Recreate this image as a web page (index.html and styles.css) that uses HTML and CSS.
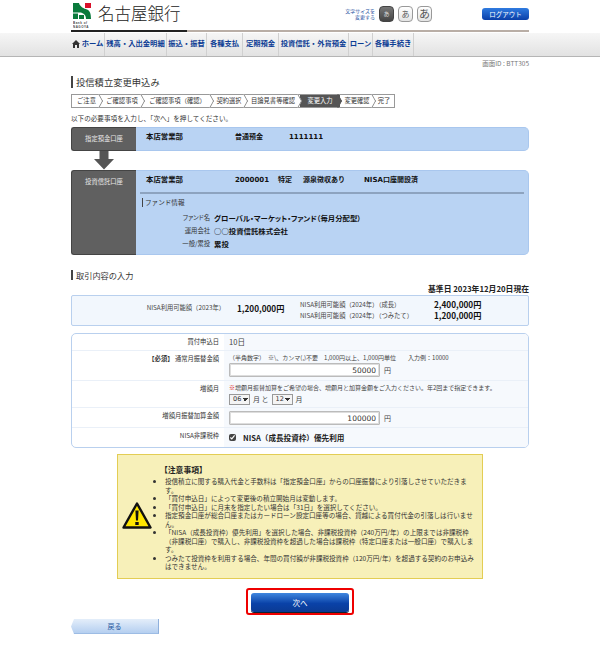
FILE: index.html
```html
<!DOCTYPE html>
<html lang="ja">
<head>
<meta charset="utf-8">
<title>投信積立変更申込み</title>
<link rel="stylesheet" href="styles.css">
</head>
<body>
<header class="header wrap">
  <div class="brand">
    <svg class="logo" width="19" height="26" viewBox="0 0 19 26">
      <path d="M0 0H6C7 4 11 5.500 14 6.500 17 7.500 18 11 18 16H13C13 12 11 10.500 8 9.500H0z" fill="#0a7a3c"/>
      <path d="M12 0h6v5h-6z" fill="#d8102a"/>
      <path d="M0 10.500h5V16H0zM6 12h5v4H6z" fill="#0a7a3c"/>
      <text class="logo-text" x="0" y="20.500">Bank of</text>
      <text class="logo-text" x="0" y="24.500">NAGOYA</text>
    </svg>
    <span class="bank">名古屋銀行</span>
  </div>
  <div class="tools">
    <span class="size-label">文字サイズを<br>変更する</span>
    <span class="size size-on">あ</span>
    <span class="size size-md">あ</span>
    <span class="size size-lg">あ</span>
    <span class="logout">ログアウト</span>
  </div>
</header>
<div class="rule wrap"><span class="rule-dark"></span></div>
<nav class="nav">
  <div class="wrap nav-items">
    <a class="nav-item w-home"><svg class="home" width="8" height="8" viewBox="0 0 8 8"><path d="M4 0 8 4H7v4H1V4H0z" fill="#333"/><path d="M3 5h2v3H3z" fill="#eee"/></svg>ホーム</a>
    <a class="nav-item w-a">残高・入出金明細</a>
    <a class="nav-item w-b">振込・振替</a>
    <a class="nav-item w-c">各種支払</a>
    <a class="nav-item w-c">定期預金</a>
    <a class="nav-item w-d">投資信託・外貨預金</a>
    <a class="nav-item w-e">ローン</a>
    <a class="nav-item w-f">各種手続き</a>
  </div>
</nav>
<main class="wrap">
  <p class="screen-id">画面ID : BTT305</p>
  <h1 class="title">投信積立変更申込み</h1>
  <ol class="steps">
    <li class="step s1">ご注意</li>
    <li class="step s2">ご確認事項</li>
    <li class="step s3">ご確認事項（確認）</li>
    <li class="step s4">契約選択</li>
    <li class="step s5">目論見書等確認</li>
    <li class="step s6 current">変更入力</li>
    <li class="step s7">変更確認</li>
    <li class="step s8">完了</li>
  </ol>
  <p class="lead">以下の必要事項を入力し、「次へ」を押してください。</p>

  <section class="account acc-short">
    <h2 class="acc-label">指定預金口座</h2>
    <div class="acc-body acc-row">
      <span class="c1">本店営業部</span><span class="c2">普通預金</span><span>1111111</span>
    </div>
  </section>
  <svg class="arrow" width="20" height="19" viewBox="0 0 20 19"><path d="M5.500 0h9v8H20L10 18.500 0 8h5.500z" fill="#555"/></svg>
  <section class="account acc-tall">
    <h2 class="acc-label">投資信託口座</h2>
    <div class="acc-body">
      <div class="acc-row acc-line">
        <span class="c1">本店営業部</span><span class="c3">2000001</span><span class="c4">特定</span><span class="c5">源泉徴収あり</span><span>NISA口座開設済</span>
      </div>
      <h3 class="fund-title">ファンド情報</h3>
      <dl class="fund">
        <dt>ファンド名</dt><dd>グローバル・マーケット・ファンド（毎月分配型）</dd>
        <dt>運用会社</dt><dd>○○投資信託株式会社</dd>
        <dt>一般/累投</dt><dd>累投</dd>
      </dl>
    </div>
  </section>

  <h1 class="title title-2">取引内容の入力</h1>
  <p class="base-date">基準日 2023年12月20日現在</p>
  <section class="limit">
    <div class="limit-left"><span class="limit-name">NISA利用可能額（2023年）</span><b class="limit-val">1,200,000円</b></div>
    <div class="limit-right">
      <div class="limit-row"><span class="limit-name2">NISA利用可能額（2024年）（成長）</span><b class="limit-val">2,400,000円</b></div>
      <div class="limit-row"><span class="limit-name2">NISA利用可能額（2024年）（つみたて）</span><b class="limit-val">1,200,000円</b></div>
    </div>
  </section>

  <section class="form">
    <div class="row r1"><div class="lab">買付申込日</div><div class="val val-big">10日</div></div>
    <div class="row r2"><div class="lab"><b>【必須】</b> 通常月振替金額</div><div class="val">
      <div class="hint">（半角数字）　※\、カンマ(,)不要　1,000円以上、1,000円単位　　入力例：10000</div>
      <div class="amount"><input class="input" type="text" value="50000"><span>円</span></div>
    </div></div>
    <div class="row r3"><div class="lab">増額月</div><div class="val">
      <div class="hint"><span class="red">※</span>増額月振替加算をご希望の場合、増額月と加算金額をご入力ください。年2回まで指定できます。</div>
      <div class="months">
        <select class="sel"><option>06</option></select><span>月 と</span>
        <select class="sel"><option>12</option></select><span>月</span>
      </div>
    </div></div>
    <div class="row r4"><div class="lab">増額月振替加算金額</div><div class="val"><div class="amount"><input class="input" type="text" value="100000"><span>円</span></div></div></div>
    <div class="row r5"><div class="lab">NISA非課税枠</div><div class="val check"><input class="cb" type="checkbox" checked><b>NISA（成長投資枠）優先利用</b></div></div>
  </section>

  <section class="notice">
    <svg class="warn" width="30" height="27" viewBox="0 0 30 27">
      <path d="M15 1.500 28.500 25.500H1.500z" fill="#ffe600" stroke="#111" stroke-width="2.400" stroke-linejoin="round"/>
      <path d="M13.400 8.500h3.200l-.6 10h-2zM13.300 20h3.400v3h-3.400z" fill="#111"/>
    </svg>
    <div class="notice-body">
      <h2 class="notice-title">【注意事項】</h2>
      <ul class="notice-list">
        <li>投信積立に関する購入代金と手数料は「指定預金口座」からの口座振替により引落しさせていただきま<br>す。</li>
        <li>「買付申込日」によって変更後の積立開始月は変動します。</li>
        <li>「買付申込日」に月末を指定したい場合は「31日」を選択してください。</li>
        <li>指定預金口座が総合口座またはカードローン設定口座等の場合、貸越による買付代金の引落しは行いませ<br>ん。</li>
        <li>「NISA（成長投資枠）優先利用」を選択した場合、非課税投資枠（240万円/年）の上限までは非課税枠<br>（非課税口座）で購入し、非課税投資枠を超過した場合は課税枠（特定口座または一般口座）で購入しま<br>す。</li>
        <li>つみたて投資枠を利用する場合、年間の買付額が非課税投資枠（120万円/年）を超過する契約のお申込み<br>はできません。</li>
      </ul>
    </div>
  </section>

  <div class="next-wrap"><button class="next" type="button">次へ</button></div>
  <button class="back" type="button">戻る</button>
</main>
</body>
</html>
```
FILE: styles.css
```css
* { box-sizing: border-box; }
html, body { margin: 0; padding: 0; }
body {
  height: 653px;
  overflow: hidden;
  background: #fff;
  color: #333;
  font: 6.6px/1.2 "DejaVu Sans", "Noto Sans CJK JP", sans-serif;
}
.wrap { width: 458px; margin-left: 71px; }
h1, h2, h3, p, ul, ol, dl, dd { margin: 0; padding: 0; font-weight: normal; }

/* header */
.header { height: 30px; display: flex; justify-content: space-between; }
.brand { display: flex; align-items: flex-start; padding: 3px 0 0 2px; }
.logo { display: block; }
.logo-text { font: 700 3px "Liberation Sans", sans-serif; letter-spacing: .5px; fill: #444; }
.bank { margin: 0 0 0 6px; font: 300 16.5px/20px "Noto Sans CJK JP", sans-serif; color: #222; }
.tools { display: flex; align-items: center; height: 28px; }
.size-label { width: 31px; text-align: right; font-size: 5px; line-height: 6px; color: #1d4fa0; margin-right: 4px; font-family: "Noto Sans CJK JP", sans-serif; }
.size {
  width: 15px; height: 16px; margin-right: 4px;
  border: 1px solid #999; border-radius: 4px;
  background: linear-gradient(#fff, #e4e4e4);
  display: flex; align-items: center; justify-content: center;
  color: #555; font-family: "Noto Sans CJK JP", sans-serif;
}
.size-on { background: linear-gradient(#777, #444); color: #ddd; font-size: 6px; border-color: #444; }
.size-md { font-size: 8px; }
.size-lg { font-size: 11px; }
.logout {
  width: 47px; height: 12px; margin-left: 46px;
  border-radius: 3px; background: linear-gradient(#2f7be0, #0a3fa8);
  color: #fff; text-align: center; font: 6.5px/12px "Noto Sans CJK JP", sans-serif;
}
.rule { height: 2px; background: #b9aea6; }
.rule-dark { display: block; width: 116px; height: 2px; background: #222; }

/* nav */
.nav {
  height: 24px; margin-top: 1px;
  background: linear-gradient(#f6f6f6, #e2e2e2);
  border-bottom: 1px solid #b5b5b5;
}
.nav-items { display: flex; height: 23px; }
.nav-item {
  display: flex; align-items: center; justify-content: center; gap: 1px;
  height: 100%; padding-bottom: 1px;
  border-right: 1px solid #d0d0d0;
  font: 700 7.3px/1 "Noto Sans CJK JP", sans-serif;
  color: #0b3c94;
  white-space: nowrap;
}
.home { flex: none; margin-right: 1px; }
.w-home { width: 34px; }
.w-a { width: 62px; }
.w-b { width: 40px; }
.w-c { width: 36px; }
.w-d { width: 70px; }
.w-e { width: 24px; }
.w-f { width: 41px; }

/* headings */
.screen-id { height: 9px; margin-top: 2px; text-align: right; color: #777; font: 6.5px/9px "Noto Sans CJK JP", sans-serif; }
.title {
  margin-top: 8px; height: 12px; padding-left: 3px;
  border-left: 2px solid #444;
  font: 9.300px/12px "Noto Sans CJK JP", sans-serif; color: #333;
}
.title-2 { margin-top: 15px; height: 10px; font-size: 8.200px; line-height: 10px; }

/* steps */
.steps {
  list-style: none; margin-top: 6px; width: 324px; height: 14px;
  display: flex; border: 1px solid #999; background: #fff;
  font: 6.300px/12px "Noto Sans CJK JP", sans-serif; color: #333;
}
.step { position: relative; text-align: center; white-space: nowrap; }
.step::after {
  content: ""; position: absolute; right: -3px; top: 1px; width: 9px; height: 9px;
  transform: scaleX(.55) rotate(45deg);
  border-top: 1px solid #777; border-right: 1px solid #777; background: #fff; z-index: 1;
}
.s8::after { display: none; }
.s1 { width: 29px; }
.s2 { width: 42px; }
.s3 { width: 69px; }
.s4 { width: 34px; }
.s5 { width: 54px; }
.s6 { width: 40px; }
.s7 { width: 34px; }
.s8 { width: 20px; }
.current { background: #555; color: #fff; }
.current::after { background: #555; border-color: #555; }

.lead { margin-top: 5px; height: 10px; font: 6.600px/10px "Noto Sans CJK JP", sans-serif; }

/* accounts */
.account { display: flex; font-family: "DejaVu Sans", "Noto Sans CJK JP", sans-serif; }
.acc-short { margin-top: 4px; height: 24px; }
.acc-tall { height: 85px; }
.acc-label {
  flex: none; width: 65px; padding-top: 6px;
  background: #606060; border: 1px solid #444; border-right: 0; border-radius: 3px 0 0 3px;
  color: #e8e8e8; text-align: center; font-size: 6.300px; line-height: 10px;
  font-family: "Noto Sans CJK JP", sans-serif;
}
.acc-body {
  flex: 1; background: #b9d3f3; border: 1px solid #a9c7ee; border-left: 0; border-radius: 0 5px 5px 0;
  font-weight: 700; color: #111;
}
.acc-row { display: flex; padding: 3px 0 0 10px; line-height: 12px; font-size: 7px; }
.c1 { width: 89px; font-size: 7.400px; }
.c2 { width: 54px; }
.c3 { width: 43px; }
.c4 { width: 25px; }
.c5 { width: 61px; }
.arrow { display: block; margin: 0 0 0 23px; height: 19px; }
.acc-line { margin: 0 4px; padding: 3px 0 0 6px; height: 23px; border-bottom: 2px solid #8da3bf; }
.fund-title {
  margin: 4px 0 0 6px; padding-left: 2px; height: 9px; border-left: 1px solid #444;
  font: 400 6.600px/9px "Noto Sans CJK JP", sans-serif; color: #333;
}
.fund {
  display: grid; grid-template-columns: 74px 1fr; column-gap: 4px; margin-top: 4px;
  grid-auto-rows: 13px; line-height: 13px;
  font-family: "Noto Sans CJK JP", sans-serif; font-feature-settings: "palt";
}
.fund dt { text-align: right; font-weight: 400; color: #333; font-size: 6.300px; }
.fund dd { font-size: 7.400px; font-weight: 700; color: #111; }

/* limit */
.base-date { margin-top: 4px; height: 10px; text-align: right; font: 700 7.800px/10px "Noto Sans CJK JP", sans-serif; color: #222; }
.limit {
  margin-top: 1px; height: 31px; display: flex;
  background: #f2f7fd; border: 1px solid #b9d0ee; border-radius: 2px;
  font-family: "Noto Sans CJK JP", sans-serif;
}
.limit-left { display: flex; width: 228px; padding-top: 6px; height: 20px; }
.limit-name { width: 153px; text-align: right; font-size: 6.300px; line-height: 12px; color: #444; }
.limit-val { font-size: 8.200px; line-height: 12px; color: #111; }
.limit-left .limit-val { margin-left: 12px; }
.limit-right { padding-top: 3px; }
.limit-row { display: flex; height: 11px; line-height: 11px; }
.limit-name2 { width: 134px; font-size: 6.300px; line-height: 11px; color: #444; }
.limit-row .limit-val { line-height: 11px; }

/* form */
.form {
  margin-top: 7px; border: 1px solid #b9d0ee; border-radius: 5px; overflow: hidden;
  font-family: "Noto Sans CJK JP", sans-serif;
}
.row { display: flex; border-bottom: 1px solid #eaf0f8; }
.r1 { height: 17px; }
.r2 { height: 30px; }
.r3 { height: 27px; }
.r4 { height: 20px; }
.r5 { height: 19px; border-bottom: 0; }
.lab { flex: none; width: 152px; padding: 2px 5px 0 0; text-align: right; font-size: 6.300px; line-height: 11px; color: #333; }
.val { flex: 1; background: #f6f9fd; padding: 2px 0 0 5px; font-size: 6px; line-height: 10px; color: #444; }
.val-big { font-size: 7.600px; line-height: 12px; }
.hint { height: 10px; white-space: nowrap; }
.red { color: #d00; }
.amount { display: flex; align-items: center; gap: 4px; font-size: 7px; }
.input {
  width: 151px; height: 14px; padding: 0 3px; margin: 0;
  border: 1px solid #bbb; border-radius: 1px; background: #fff; box-shadow: inset 0 0 0 1px #ddd;
  text-align: right; font: 7.500px/12px "DejaVu Sans", sans-serif; color: #333;
}
.r4 .val { padding-top: 3px; }
.months { display: flex; align-items: center; gap: 3px; font-size: 7px; height: 12px; }
.sel {
  appearance: none; -webkit-appearance: none;
  width: 21px; height: 11px; padding: 0 0 0 3px; margin: 0;
  font: 6.500px/9px "DejaVu Sans", sans-serif; color: #333;
  border: 1px solid #999;
  background-color: #f4f4f4;
  background-image: linear-gradient(45deg, transparent 50%, #333 50%), linear-gradient(-45deg, transparent 50%, #333 50%);
  background-size: 3px 3px, 3px 3px;
  background-position: 12px 3px, 15px 3px;
  background-repeat: no-repeat;
}
.check { display: flex; align-items: center; gap: 7px; padding: 0 0 0 5px; font-size: 7.600px; color: #222; }
.cb { width: 7px; height: 7px; margin: 0; accent-color: #444; }

/* notice */
.notice {
  width: 366px; height: 125px; margin: 6px 0 0 46px; position: relative;
  background: #f7f0b9; border: 1px solid #e3cd54;
  font-family: "Noto Sans CJK JP", sans-serif;
}
.warn { position: absolute; left: 4px; top: 47px; }
.notice-body { padding: 9px 0 0 42px; }
.notice-title { font-size: 7.800px; line-height: 11px; font-weight: 700; color: #222; }
.notice-list { margin-top: 2px; padding-left: 5px; list-style: disc; white-space: nowrap; font-size: 6.570px; line-height: 8.500px; color: #333; }

/* buttons */
.next-wrap {
  width: 108px; height: 27px; margin: 9px 0 0 175px; padding: 3px;
  border: 2px solid #ee0000; border-radius: 3px; background: #fff;
}
.next {
  display: block; width: 98px; height: 19px; padding: 0;
  border: 0; border-radius: 3px; background: linear-gradient(#3f86df, #0a42a8 55%, #0b3a93);
  box-shadow: 0 1px 0 #123;
  color: #fff; font: 7.500px/19px "Noto Sans CJK JP", sans-serif;
}
.back {
  display: block; width: 88px; height: 15px; margin-top: 4px; padding: 0;
  border: 0; border-right: 1px solid #8fb0dc; border-bottom: 1px solid #9dbce4;
  clip-path: polygon(3px 0, 100% 0, 100% 100%, 3px 100%, 0 50%);
  background: linear-gradient(#e4eefa, #b5cff0);
  color: #24569d; font: 7px/14px "Noto Sans CJK JP", sans-serif;
}
```
